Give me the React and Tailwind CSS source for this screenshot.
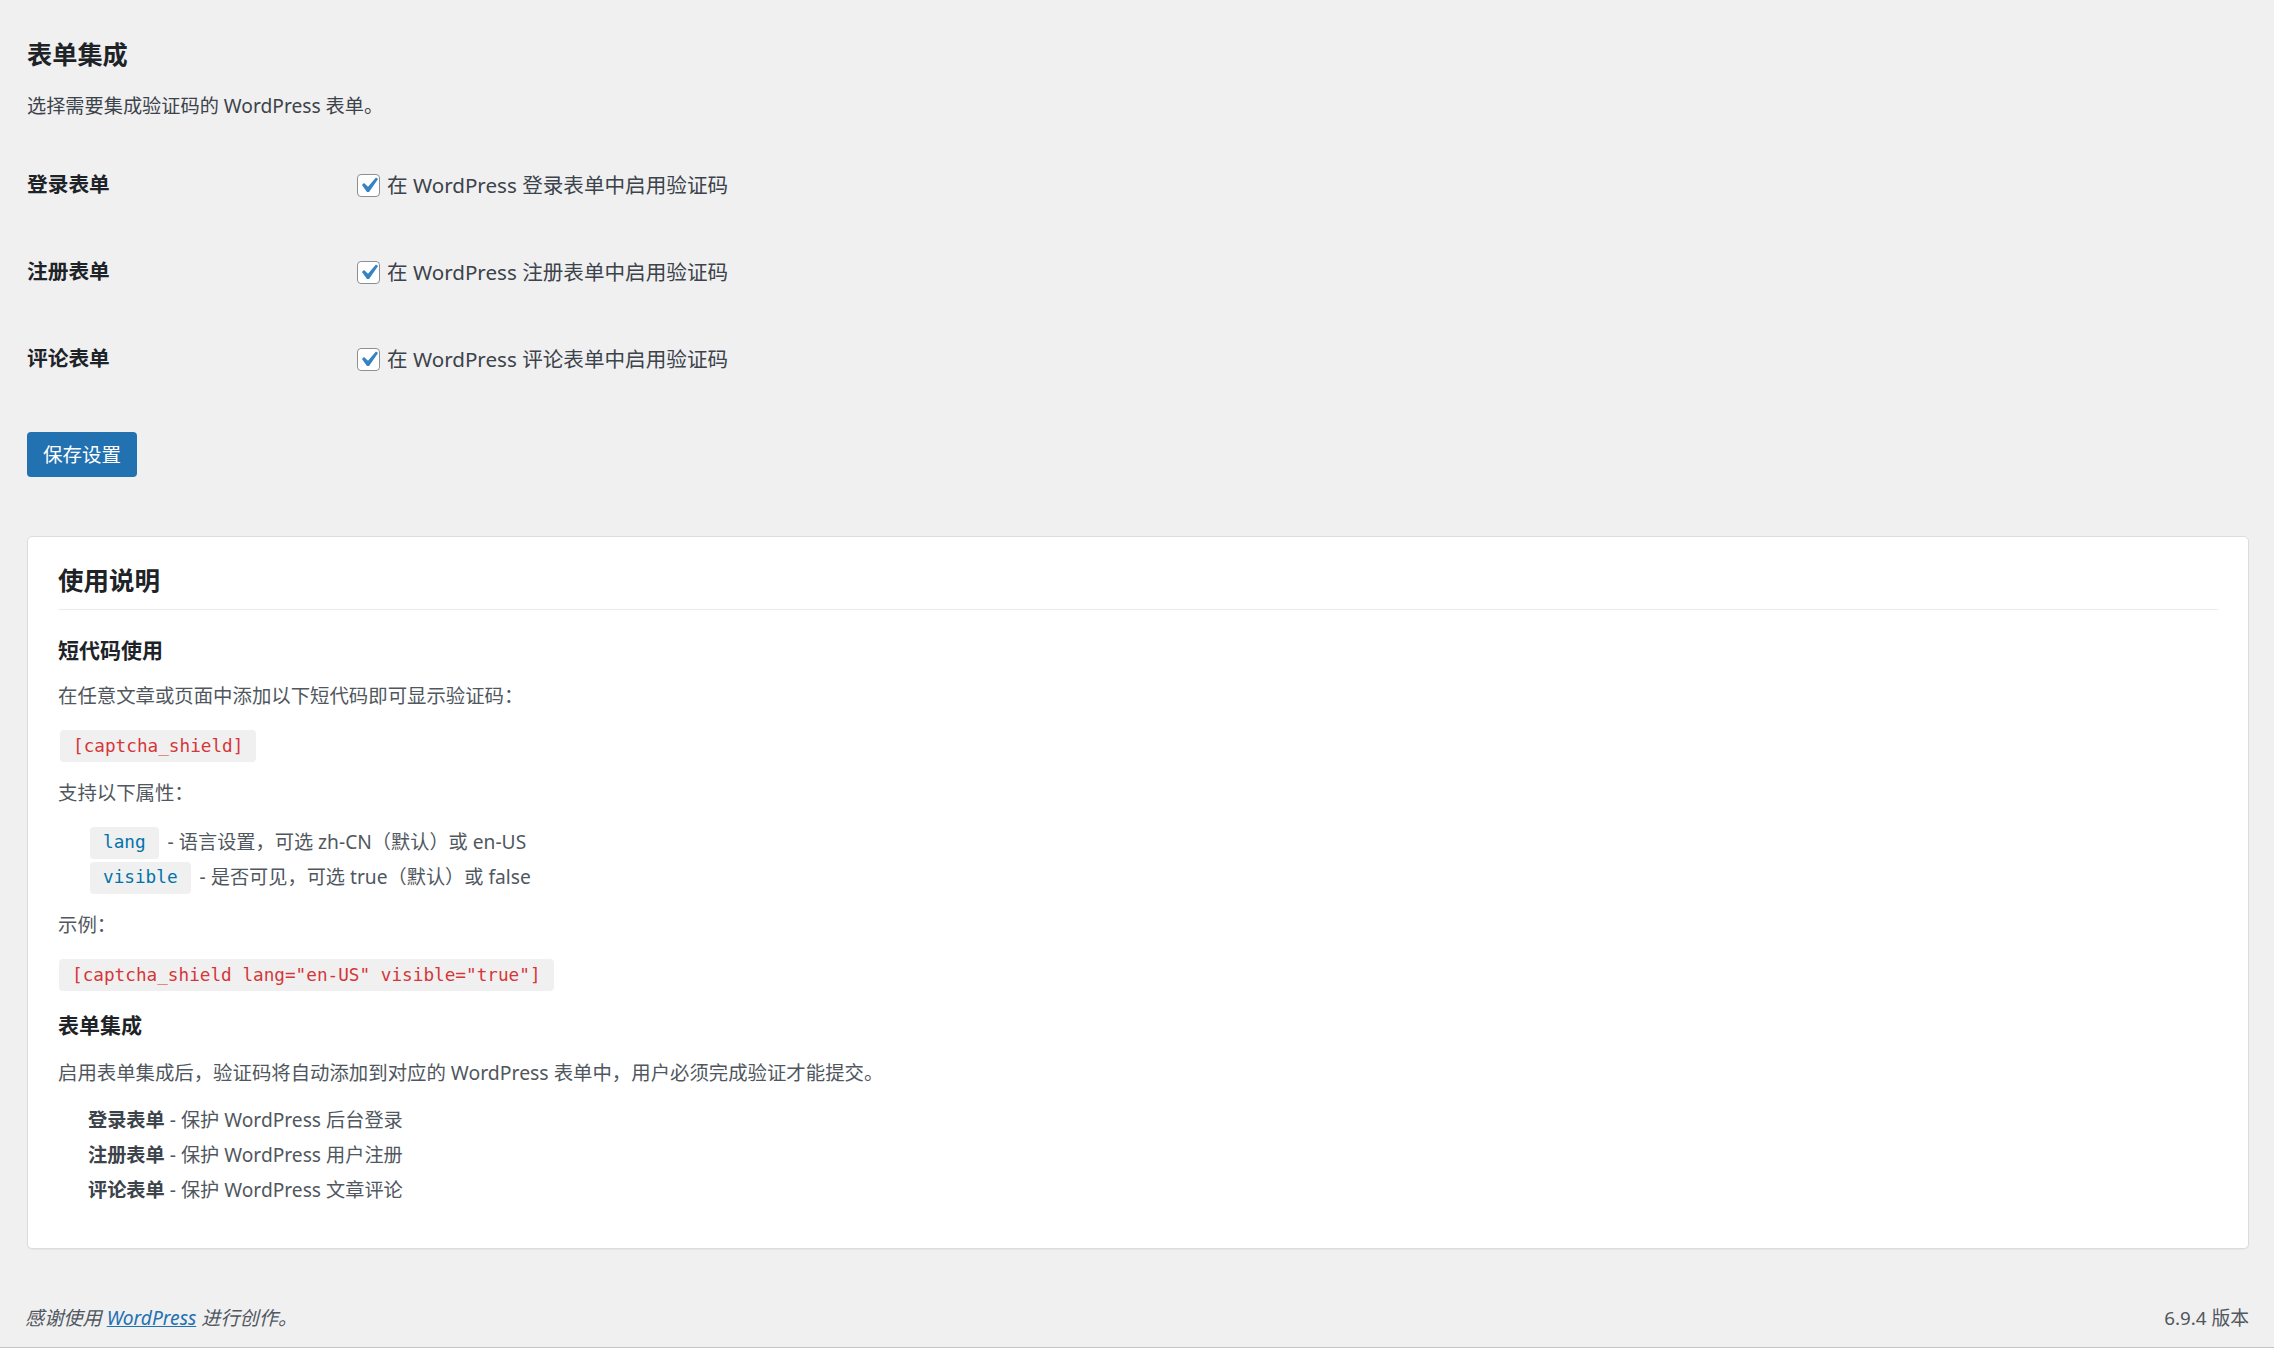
import React from "react";

const SANS = { fontFamily: '"Noto Sans", "Noto Sans CJK SC", sans-serif' };

function Check() {
  return (
    <span className="flex h-[23px] w-[23px] shrink-0 items-center justify-center rounded-[4px] border border-[#8c8f94] bg-white">
      <svg viewBox="0 0 20 20" className="h-[31px] w-[31px] shrink-0">
        <path
          d="M14.83 4.89l1.34.94-5.81 8.38H9.02L5.78 9.67l1.34-1.25 2.57 2.4z"
          fill="#3582c4"
        />
      </svg>
    </span>
  );
}

function FormRow({ label, text }) {
  return (
    <div className="flex h-[87px] items-center">
      <div className="w-[330px] text-[20.7px] font-bold text-[#1d2327]">{label}</div>
      <label className="flex items-center gap-[7px] pt-[2px] text-[20.6px] text-[#3c434a]">
        <Check />
        <span>{text}</span>
      </label>
    </div>
  );
}

function Code({ children, tone }) {
  return (
    <code
      className={`inline-flex h-[32px] items-center rounded-[4px] bg-[#f0f0f1] px-[13px] font-['DejaVu_Sans_Mono',monospace] text-[17.7px] ${tone}`}
    >
      {children}
    </code>
  );
}

export default function App() {
  return (
    <div
      className="box-border flex h-[1348px] flex-col border-b border-[#c3c4c7] bg-[#f0f0f1]"
      style={SANS}
    >
      <div className="pl-[27px] pr-[25px]">
        <h2 className="pt-[38px] text-[25.2px] font-bold leading-[32px] text-[#1d2327]">表单集成</h2>
        <p className="mt-[22px] text-[19.2px] leading-[28px] text-[#3c434a]">
          选择需要集成验证码的 WordPress 表单。
        </p>

        <div className="mt-[21px]">
          <FormRow label="登录表单" text="在 WordPress 登录表单中启用验证码" />
          <FormRow label="注册表单" text="在 WordPress 注册表单中启用验证码" />
          <FormRow label="评论表单" text="在 WordPress 评论表单中启用验证码" />
        </div>

        <button className="mt-[30px] flex h-[45px] w-[110px] items-center justify-center rounded-[4px] bg-[#2271b1] text-[19.5px] text-white">
          保存设置
        </button>

        {/* usage instructions card */}
        <div className="mt-[59px] rounded-[5px] border border-[#dcdcde] bg-white px-[30px] pb-[40px] pt-[27px] shadow-[0_1px_1px_rgba(0,0,0,0.04)]">
          <h2 className="text-[25.5px] font-bold leading-[32px] text-[#1d2327]">使用说明</h2>
          <div className="mt-[13px] h-px bg-[#ececec]" />

          <h3 className="mt-[26px] text-[21px] font-bold leading-[28px] text-[#1d2327]">短代码使用</h3>
          <p className="mt-[18px] text-[19.4px] leading-[28px] text-[#50575e]">
            在任意文章或页面中添加以下短代码即可显示验证码：
          </p>
          <div className="mt-[20px] flex pl-[2px]">
            <Code tone="text-[#d63638]">[captcha_shield]</Code>
          </div>
          <p className="mt-[17px] text-[19.4px] leading-[28px] text-[#50575e]">支持以下属性：</p>
          <ul className="mt-[18px] pl-[32px] text-[19.2px] text-[#50575e]">
            <li className="flex h-[35px] items-center gap-[9px]">
              <Code tone="text-[#0073aa]">lang</Code>
              <span>- 语言设置，可选 zh-CN（默认）或 en-US</span>
            </li>
            <li className="flex h-[35px] items-center gap-[9px]">
              <Code tone="text-[#0073aa]">visible</Code>
              <span>- 是否可见，可选 true（默认）或 false</span>
            </li>
          </ul>
          <p className="mt-[16px] text-[19.4px] leading-[28px] text-[#50575e]">示例：</p>
          <div className="mt-[20px] flex pl-[1px]">
            <Code tone="text-[#d63638]">[captcha_shield lang="en-US" visible="true"]</Code>
          </div>

          <h3 className="mt-[20px] text-[21px] font-bold leading-[28px] text-[#1d2327]">表单集成</h3>
          <p className="mt-[20px] text-[19.4px] leading-[28px] text-[#50575e]">
            启用表单集成后，验证码将自动添加到对应的 WordPress 表单中，用户必须完成验证才能提交。
          </p>
          <ul className="mt-[16px] pl-[30px] text-[19.2px] text-[#50575e]">
            <li className="flex h-[35px] items-center">
              <span><strong className="font-bold text-[#3c434a]">登录表单</strong> - 保护 WordPress 后台登录</span>
            </li>
            <li className="flex h-[35px] items-center">
              <span><strong className="font-bold text-[#3c434a]">注册表单</strong> - 保护 WordPress 用户注册</span>
            </li>
            <li className="flex h-[35px] items-center">
              <span><strong className="font-bold text-[#3c434a]">评论表单</strong> - 保护 WordPress 文章评论</span>
            </li>
          </ul>
        </div>
      </div>

      <footer className="mt-[55px] flex items-center justify-between pl-[25px] pr-[25px] text-[19.2px] leading-[28px] text-[#50575e]">
        <p className="italic">
          感谢使用{" "}
          <a href="#" className="text-[#2271b1] underline">
            WordPress
          </a>{" "}
          进行创作。
        </p>
        <p className="text-[18.8px]">6.9.4 版本</p>
      </footer>
    </div>
  );
}
